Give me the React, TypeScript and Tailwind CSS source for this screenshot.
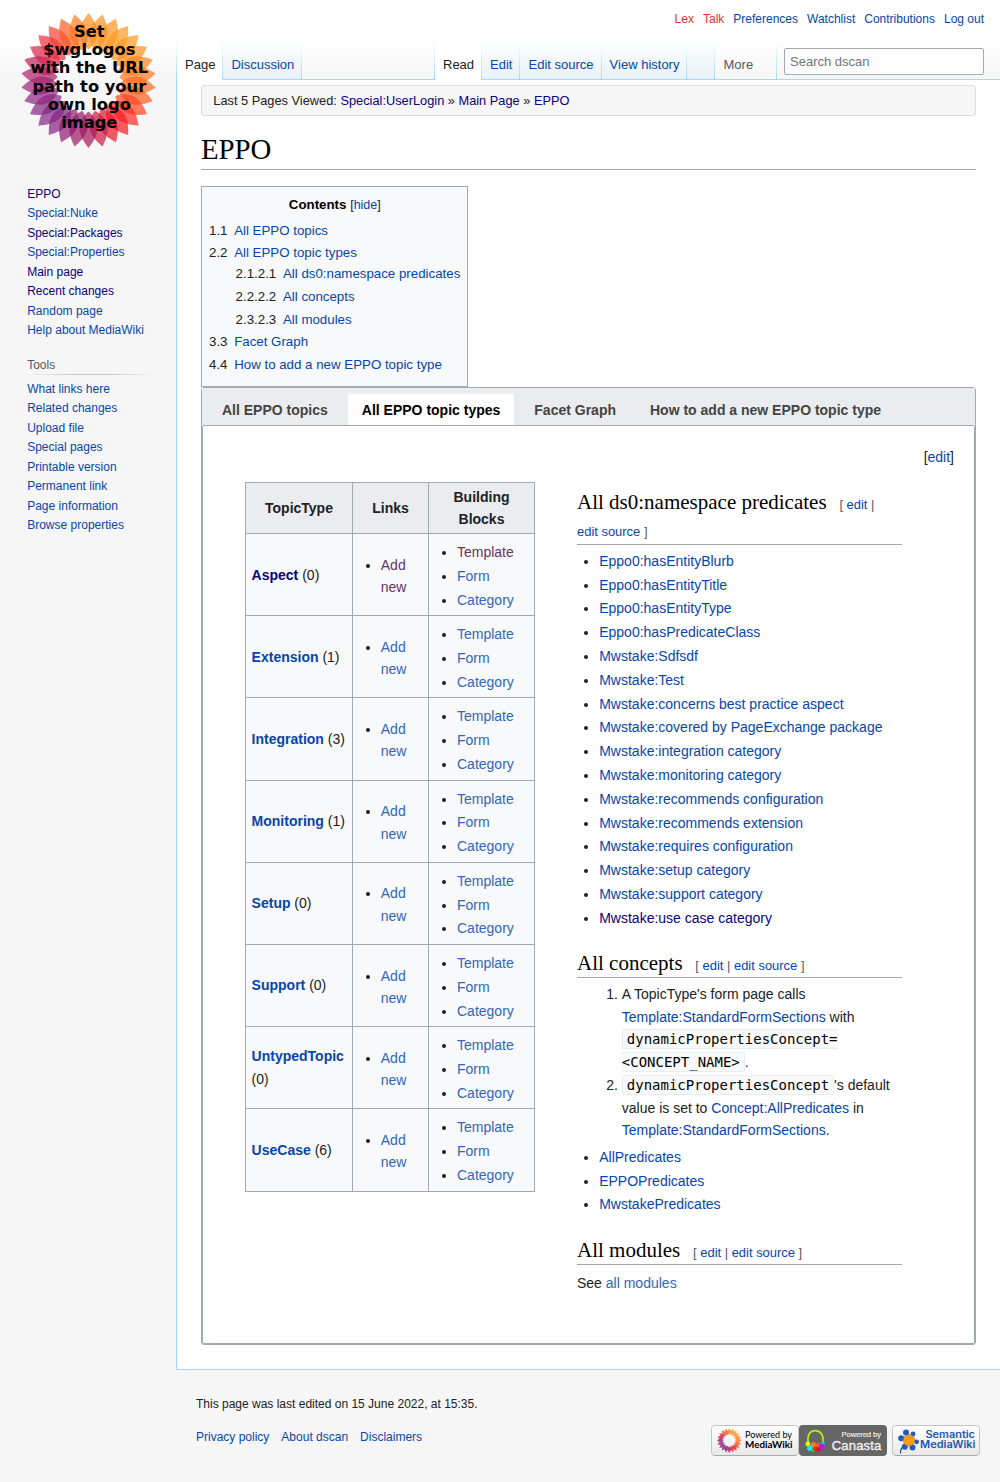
import React from "react";

type Tone = "link" | "visited" | "ext" | "extVisited" | "red";

const tones: Record<Tone, string> = {
  link: "text-[#0645ad]",
  visited: "text-[#0b0080]",
  ext: "text-[#3366bb]",
  extVisited: "text-[#663366]",
  red: "text-[#dd3333]",
};

function A({ tone = "link", children }: { tone?: Tone; children: React.ReactNode }) {
  return (
    <a href="#" className={tones[tone]}>
      {children}
    </a>
  );
}

const petalColors = [
  "#ff8a1e", "#ff8f1e", "#ff9420", "#ff9a20", "#ff9822", "#ff9020", "#ff8420", "#ff7820",
  "#ff6a20", "#ff5c20", "#ff4420", "#ff2c1e", "#fb181e", "#e8182c", "#cc1a44", "#a81858",
  "#9a1864", "#901a72", "#88207e", "#842484", "#862484", "#902480", "#9a2278", "#ac206c",
  "#bc2058", "#d4244c", "#ec2c3c", "#fa4030", "#ff5c24", "#ff7a20",
];

function Sunflower({ opacity, count = 30 }: { opacity: number; count?: number }) {
  return (
    <g>
      {Array.from({ length: count }, (_, i) => (
        <path
          key={i}
          d="M0-67.5C5-61 8.8-55 9-48C9-42 6-36 0-31C-6-36-9-42-9-48C-8.8-55-5-61 0-67.5Z"
          fill={petalColors[Math.floor((i * 30) / count)]}
          opacity={opacity}
          transform={`rotate(${(i * 360) / count})`}
        />
      ))}
    </g>
  );
}

function Logo() {
  const lines = ["Set", "$wgLogos", "with the URL", "path to your", "own logo", "image"];
  return (
    <svg width="176" height="160" viewBox="0 0 176 160" className="block">
      <g transform="translate(88.5 80.5)">
        <Sunflower opacity={0.7} />
      </g>
      <g fontFamily="DejaVu Sans" fontWeight="700" fontSize="16.3" textAnchor="middle" fill="#000">
        {lines.map((l, i) => (
          <text key={l} x="89.3" y={36.8 + i * 18.3}>
            {l}
          </text>
        ))}
      </g>
    </svg>
  );
}

const siteLinks: [string, Tone][] = [
  ["EPPO", "visited"],
  ["Special:Nuke", "link"],
  ["Special:Packages", "visited"],
  ["Special:Properties", "link"],
  ["Main page", "visited"],
  ["Recent changes", "visited"],
  ["Random page", "link"],
  ["Help about MediaWiki", "link"],
];
const toolLinks = [
  "What links here", "Related changes", "Upload file", "Special pages",
  "Printable version", "Permanent link", "Page information", "Browse properties",
];

function Sidebar() {
  return (
    <aside className="w-[176px] shrink-0 bg-[linear-gradient(to_bottom,#fff_40px,#f6f6f6_80px)] bg-[#f6f6f6]">
      <Logo />
      <ul className="mt-[25px] pl-[27.2px] text-[12px] leading-[19.45px]">
        {siteLinks.map(([t, tone]) => (
          <li key={t}><A tone={tone}>{t}</A></li>
        ))}
      </ul>
      <h3 className="ml-[27.2px] mt-[14.4px] h-[19px] text-[12px] leading-[21px] text-[#54595d]">Tools</h3>
      <div className="ml-[27px] h-px w-[130px] bg-[linear-gradient(to_right,rgba(200,204,209,0)_0%,#c8ccd1_33%,#c8ccd1_66%,rgba(200,204,209,0)_100%)]" />
      <ul className="mt-[5px] pl-[27.2px] text-[12px] leading-[19.45px]">
        {toolLinks.map((t) => (
          <li key={t}><A>{t}</A></li>
        ))}
      </ul>
    </aside>
  );
}

function Fade() {
  return <div className="h-full w-px shrink-0 bg-[linear-gradient(to_bottom,#fff_0%,#a7d7f9_100%)]" />;
}

function Tab({ label, width, pad = "pl-[8px]", selected = false, menu = false }: { label: string; width: string; pad?: string; selected?: boolean; menu?: boolean }) {
  const look = selected
    ? "bg-white text-[#202122]"
    : menu
      ? "border-b border-[#a7d7f9] text-[#54595d]"
      : "border-b border-[#a7d7f9] bg-[linear-gradient(to_bottom,#fff_0%,#e8f2f8_100%)] text-[#0645ad]";
  return (
    <div className={`flex h-full shrink-0 ${width}`}>
      <div className={`h-full flex-1 whitespace-nowrap pt-[16px] text-[13px] leading-[17px] ${pad} ${look}`}>{label}</div>
      <Fade />
    </div>
  );
}

function Header() {
  return (
    <header className="h-[80px] bg-[linear-gradient(to_bottom,#fff_50%,#f6f6f6_100%)]">
      <nav className="flex h-[40px] justify-end gap-[9px] pr-[16px] pt-[10px] text-[12px] leading-[19px]">
        <A tone="red">Lex</A>
        <A tone="red">Talk</A>
        <A>Preferences</A>
        <A>Watchlist</A>
        <A>Contributions</A>
        <A>Log out</A>
      </nav>
      <div className="flex h-[40px]">
        <Fade />
        <Tab label="Page" width="w-[46px]" selected />
        <Tab label="Discussion" width="w-[79px]" pad="pl-[8.4px]" />
        <div className="flex-1 border-b border-[#a7d7f9]" />
        <Fade />
        <Tab label="Read" width="w-[47px]" selected />
        <Tab label="Edit" width="w-[38px]" />
        <Tab label="Edit source" width="w-[82px]" pad="pl-[8.5px]" />
        <Tab label="View history" width="w-[85px]" pad="pl-[7.6px]" />
        <Tab label="" width="w-[28px]" />
        <Tab label="More" width="w-[62px]" pad="pl-[8.5px]" menu />
        <div className="w-[223px] border-b border-[#a7d7f9] pl-[7px] pt-[8px]">
          <div className="h-[27px] w-[200px] rounded-[2px] border border-[#a2a9b1] bg-white/50 pl-[5px] text-[13px] leading-[25px] text-[#72777d]">
            Search dscan
          </div>
        </div>
      </div>
    </header>
  );
}

function TocRow({ n, t, className = "" }: { n: string; t: string; className?: string }) {
  return (
    <li className={`flex whitespace-nowrap ${className}`}>
      <span className="pr-[6.65px]">{n}</span>
      <A>{t}</A>
    </li>
  );
}

function Toc() {
  return (
    <div className="h-[201px] w-[267px] border border-[#a2a9b1] bg-[#f8f9fa] px-[7px] pt-[7px] text-[13.3px] leading-[21.3px]">
      <div className="pl-[0.6px] text-center">
        <b className="text-black">Contents</b> <span className="text-[12.5px]">[<A>hide</A>]</span>
      </div>
      <ul className="mt-[4px]">
        <TocRow n="1.1" t="All EPPO topics" className="h-[22px]" />
        <TocRow n="2.2" t="All EPPO topic types" className="h-[21px]" />
        <TocRow n="2.1.2.1" t="All ds0:namespace predicates" className="ml-[26.6px] h-[23px]" />
        <TocRow n="2.2.2.2" t="All concepts" className="ml-[26.6px] h-[23px]" />
        <TocRow n="2.3.2.3" t="All modules" className="ml-[26.6px] h-[22px]" />
        <TocRow n="3.3" t="Facet Graph" className="h-[23px]" />
        <TocRow n="4.4" t="How to add a new EPPO topic type" className="h-[22px]" />
      </ul>
    </div>
  );
}

const topics: [string, number][] = [
  ["Aspect", 0], ["Extension", 1], ["Integration", 3], ["Monitoring", 1],
  ["Setup", 0], ["Support", 0], ["UntypedTopic", 0], ["UseCase", 6],
];

function TopicTable() {
  const th = "border border-[#a2a9b1] bg-[#eaecf0] px-[5.6px] py-[2.8px] text-center font-bold";
  const td = "border border-[#a2a9b1] px-[5.6px] py-[2.8px] align-middle";
  return (
    <table className="w-[290px] table-fixed border-collapse border border-[#a2a9b1] bg-[#f8f9fa]">
      <colgroup>
        <col className="w-[107px]" />
        <col className="w-[76px]" />
        <col className="w-[106px]" />
      </colgroup>
      <thead>
        <tr>
          <th className={th}>TopicType</th>
          <th className={th}>Links</th>
          <th className={th}>Building<br />Blocks</th>
        </tr>
      </thead>
      <tbody>
        {topics.map(([name, n], i) => (
          <tr key={name}>
            <td className={td}><b><A tone={i === 0 ? "visited" : "link"}>{name}</A></b> ({n})</td>
            <td className={td}>
              <ul className="ml-[22.2px] mt-[4.2px] list-disc">
                <li className="mb-[1.4px]"><A tone={i === 0 ? "extVisited" : "ext"}>Add<br />new</A></li>
              </ul>
            </td>
            <td className={td}>
              <ul className="ml-[22.4px] mt-[4.2px] list-disc">
                <li className="mb-[1.4px]"><A tone={i === 0 ? "extVisited" : "ext"}>Template</A></li>
                <li className="mb-[1.4px]"><A tone="ext">Form</A></li>
                <li className="mb-[1.4px]"><A tone="ext">Category</A></li>
              </ul>
            </td>
          </tr>
        ))}
      </tbody>
    </table>
  );
}

function Heading({ children, className = "" }: { children: React.ReactNode; className?: string }) {
  return (
    <h2 className={`border-b border-[#a2a9b1] font-['Liberation_Serif',serif] text-[21px] leading-[27.3px] text-black ${className}`}>
      {children}
      <span className="ml-[12.8px] font-['Liberation_Sans',sans-serif] text-[12.95px] leading-[13px] text-[#54595d]">
        [ <A>edit</A> | <span className="whitespace-nowrap"><A>edit source</A> ]</span>
      </span>
    </h2>
  );
}

const predicates = [
  "Eppo0:hasEntityBlurb", "Eppo0:hasEntityTitle", "Eppo0:hasEntityType", "Eppo0:hasPredicateClass",
  "Mwstake:Sdfsdf", "Mwstake:Test", "Mwstake:concerns best practice aspect",
  "Mwstake:covered by PageExchange package", "Mwstake:integration category",
  "Mwstake:monitoring category", "Mwstake:recommends configuration", "Mwstake:recommends extension",
  "Mwstake:requires configuration", "Mwstake:setup category", "Mwstake:support category",
  "Mwstake:use case category",
];

function Code({ children }: { children: React.ReactNode }) {
  return (
    <code className="rounded-[2px] border border-[#eaecf0] bg-[#f8f9fa] px-[4px] py-px font-['DejaVu_Sans_Mono',monospace] text-[14px] text-black">
      {children}
    </code>
  );
}

function Predicates() {
  return (
    <div className="w-[325px]">
      <Heading className="pb-[0.6px]">All ds0:namespace predicates</Heading>
      <ul className="ml-[22.2px] mt-[4.7px] list-disc">
        {predicates.map((p, i) => (
          <li key={p} className="mb-[1.4px]"><A tone={i === 15 ? "visited" : "link"}>{p}</A></li>
        ))}
      </ul>
      <Heading className="mt-[20.4px]">All concepts</Heading>
      <ol className="ml-[44.8px] mt-[5.6px] list-decimal">
        <li className="mb-[1.2px]">
          A TopicType's form page calls <A>Template:StandardFormSections</A> with{" "}
          <Code>dynamicPropertiesConcept=<wbr />&lt;CONCEPT_NAME&gt;</Code>.
        </li>
        <li className="mb-[1.4px]">
          <Code>dynamicPropertiesConcept</Code>'s default value is set to <A>Concept:AllPredicates</A> in{" "}
          <A>Template:StandardFormSections</A>.
        </li>
      </ol>
      <ul className="ml-[22.2px] mt-[4.3px] list-disc">
        {["AllPredicates", "EPPOPredicates", "MwstakePredicates"].map((p) => (
          <li key={p} className="mb-[1.4px]"><A>{p}</A></li>
        ))}
      </ul>
      <Heading className="mt-[20.8px]">All modules</Heading>
      <p className="mt-[7px]">See <A tone="ext">all modules</A></p>
    </div>
  );
}

function Tabber() {
  const item = "h-[31px] rounded-t-[2px] px-[14px] leading-[32px]";
  return (
    <section className="flex h-[958px] flex-col rounded-[3px] border border-[#a2a9b1]">
      <nav className="flex h-[37px] gap-[6px] bg-[#eaecf0] pl-[6px] pt-[6px] font-bold text-[#444]">
        <div className={item}>All EPPO topics</div>
        <div className={`${item} bg-white text-black`}>All EPPO topic types</div>
        <div className={item}>Facet Graph</div>
        <div className={item}>How to add a new EPPO topic type</div>
      </nav>
      <div className="flex-1 rounded-[2px] border border-[#a2a9b1]">
        <div className="pr-[20px] pt-[20px] text-right">[<A>edit</A>]</div>
        <div className="flex pl-[42px]">
          <div className="w-[332px] shrink-0 pt-[13.34px]"><TopicTable /></div>
          <div className="pt-[20.5px]"><Predicates /></div>
        </div>
      </div>
    </section>
  );
}

function MediaWikiBadge() {
  return (
    <svg width="88" height="31" viewBox="0 0 88 31">
      <defs>
        <linearGradient id="plate" x1="0" y1="0" x2="0" y2="1">
          <stop offset="0" stopColor="#fff" />
          <stop offset="1" stopColor="#e8e8e8" />
        </linearGradient>
      </defs>
      <rect x="0.5" y="0.5" width="87" height="30" rx="3" fill="url(#plate)" stroke="#c4c4c4" />
      <path d="M3 30.5H85" stroke="#aaa" />
      <g transform="translate(18.3 15.5) scale(.182)"><Sunflower opacity={0.8} count={20} /></g>
      <g fontFamily="Lato" fill="#000">
        <text x="34" y="13.2" fontSize="9.9" textLength="47" lengthAdjust="spacingAndGlyphs">Powered by</text>
        <text x="34" y="22.9" fontSize="10" textLength="47.5" lengthAdjust="spacingAndGlyphs" fontWeight="700">MediaWiki</text>
      </g>
    </svg>
  );
}

function CanastaBadge() {
  return (
    <svg width="88" height="31" viewBox="0 0 88 31">
      <rect width="88" height="31" rx="4" fill="#666" />
      <path d="M9.2 18C8 10 11 5.6 16.3 5.6S25 10 23.8 18" fill="none" stroke="#b5f20a" strokeWidth="1.7" />
      <circle cx="8.8" cy="19" r="2.4" fill="#eaf000" />
      <circle cx="24" cy="18.2" r="2" fill="#10c8d8" />
      <circle cx="14.5" cy="20" r="2.8" fill="#ff7a10" />
      <circle cx="19.5" cy="20.4" r="2.6" fill="#f06010" />
      <circle cx="11" cy="23.2" r="2.7" fill="#10f0f0" />
      <circle cx="16.3" cy="24.2" r="2.4" fill="#f02020" />
      <circle cx="20" cy="24" r="2.3" fill="#d01020" />
      <circle cx="22.6" cy="21.8" r="3" fill="#c010f8" />
      <circle cx="14" cy="26" r="1.3" fill="#20e020" />
      <g fontFamily="Liberation Sans" fill="#eee" stroke="#eee" textAnchor="end">
        <text x="82" y="11.5" fontSize="7.6" textLength="39.5" strokeWidth=".15">Powered by</text>
        <text x="82.3" y="24.8" fontSize="13" textLength="49.5" strokeWidth=".4">Canasta</text>
      </g>
    </svg>
  );
}

function SemanticBadge() {
  const petals = [[14, 7.5], [21, 9], [24.6, 16.8], [20.5, 22.6], [12.8, 21.8], [9.2, 13.2]];
  return (
    <svg width="88" height="31" viewBox="0 0 88 31">
      <rect x="0.5" y="0.5" width="87" height="30" rx="3" fill="url(#plate)" stroke="#c4c4c4" />
      <path d="M3 30.5H85" stroke="#aaa" />
      <path d="M12 21Q8 23.5 8.6 28.5" fill="none" stroke="#203c68" strokeWidth="1.1" />
      {petals.map(([x, y], i) => (
        <circle key={i} cx={x} cy={y} r={i === 1 || i === 2 ? 2.4 : 3} fill="#2358bd" />
      ))}
      <circle cx="17" cy="15.3" r="5.8" fill="#f89c14" stroke="#7a7468" strokeWidth=".6" />
      <g fontFamily="Inter" fill="#2355b0" textAnchor="end" fontWeight="600">
        <text x="83" y="13.3" fontSize="9.9" textLength="49.5" lengthAdjust="spacingAndGlyphs">Semantic</text>
        <text x="83.5" y="23.2" fontSize="9.9" textLength="55.5" lengthAdjust="spacingAndGlyphs">MediaWiki</text>
      </g>
    </svg>
  );
}

export default function App() {
  return (
    <div className="flex h-[1482px] w-[1000px] overflow-hidden bg-[#f6f6f6] font-['Liberation_Sans',sans-serif] text-[14px] leading-[22.4px] text-[#202122]">
      <Sidebar />
      <div className="flex w-[824px] flex-col">
        <Header />
        <main className="h-[1290px] border-b border-l border-[#a7d7f9] bg-white pl-[24px] pr-[24px] pt-[5px]">
          <div className="h-[31px] rounded-[3px] border border-[#dddddd] bg-[#f6f6f6] pl-[11.3px] text-[12.8px] leading-[30px]">
            Last 5 Pages Viewed: <A tone="visited">Special:UserLogin</A> » <A tone="visited">Main Page</A> » <A tone="visited">EPPO</A>
          </div>
          <h1 className="mb-[16px] mt-[15px] h-[39px] border-b border-[#a2a9b1] font-['Liberation_Serif',serif] text-[28.8px] leading-[37.4px] text-black">
            EPPO
          </h1>
          <Toc />
          <Tabber />
        </main>
        <footer className="flex flex-1 justify-between pl-[20px] pr-[20px] text-[12px]">
          <div className="pt-[25px] leading-[19px]">
            <p>This page was last edited on 15 June 2022, at 15:35.</p>
            <div className="mt-[14px] flex gap-[12px]">
              <A>Privacy policy</A>
              <A>About dscan</A>
              <A>Disclaimers</A>
            </div>
          </div>
          <div className="flex pt-[55px]">
            <MediaWikiBadge />
            <CanastaBadge />
            <div className="ml-[5px]"><SemanticBadge /></div>
          </div>
        </footer>
      </div>
    </div>
  );
}
